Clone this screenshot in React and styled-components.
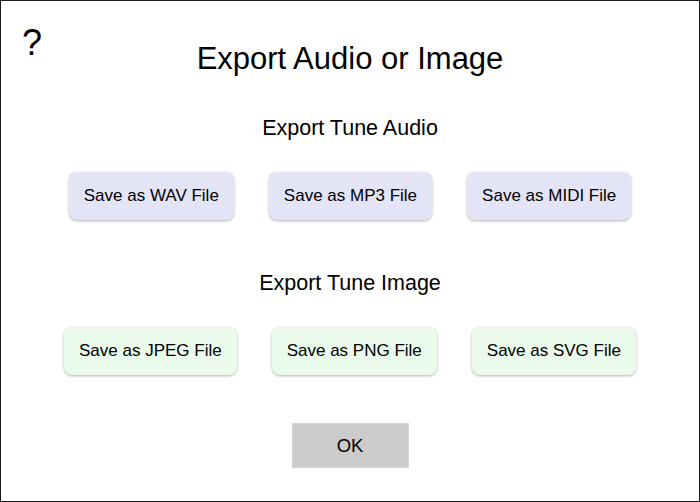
import React from 'react'
import { styled, createGlobalStyle } from 'styled-components'

const GlobalStyle = createGlobalStyle`
  html, body {
    margin: 0;
    padding: 0;
    background: #ffffff;
  }
  body {
    font-family: 'Liberation Sans', Arial, Helvetica, sans-serif;
    color: #000;
  }
`

const audioButtons = ['Save as WAV File', 'Save as MP3 File', 'Save as MIDI File']
const imageButtons = ['Save as JPEG File', 'Save as PNG File', 'Save as SVG File']

function App () {
  return (
    <>
      <GlobalStyle />
      <Dialog>
        {/* help button in the corner */}
        <Help title='Help'>?</Help>
        <Title>Export Audio or Image</Title>

        <Section>
          <Heading>Export Tune Audio</Heading>
          <Row>
            {audioButtons.map(label => (
              <SaveButton key={label} $tone='audio'>{label}</SaveButton>
            ))}
          </Row>
        </Section>

        <Section $gap={51}>
          <Heading>Export Tune Image</Heading>
          <Row>
            {imageButtons.map(label => (
              <SaveButton key={label} $tone='image'>{label}</SaveButton>
            ))}
          </Row>
        </Section>

        <OkButton>OK</OkButton>
      </Dialog>
    </>
  )
}

export default App

const Dialog = styled.div`
  position: relative;
  box-sizing: border-box;
  width: 700px;
  height: 502px;
  border: 1px solid #1c1c1c;
  padding-top: 40px;
  display: flex;
  flex-direction: column;
  align-items: center;
  background: #fff;
`

const Help = styled.div`
  position: absolute;
  top: 24px;
  left: 21px;
  font-size: 36px;
  line-height: 36px;
  cursor: pointer;
  user-select: none;
`

const Title = styled.h1`
  margin: 0;
  font-size: 31px;
  line-height: 36px;
  font-weight: normal;
  text-align: center;
`

const Section = styled.section`
  display: flex;
  flex-direction: column;
  align-items: center;
  margin-top: ${p => p.$gap ?? 39}px;
`

const Heading = styled.h2`
  margin: 0 0 32px;
  font-size: 21.5px;
  line-height: 24px;
  font-weight: normal;
`

const Row = styled.div`
  display: flex;
  justify-content: center;
  gap: 35px;
`

const SaveButton = styled.button`
  height: 48px;
  padding: 0 15px;
  border: none;
  border-radius: 8px;
  background: ${p => (p.$tone === 'audio' ? '#e4e4f7' : '#eafaeb')};
  box-shadow: 0 1px 3px rgba(0, 0, 0, 0.3);
  font-family: inherit;
  font-size: 17px;
  color: #000;
  cursor: pointer;
`

const OkButton = styled.button`
  margin-top: 48px;
  width: 117px;
  height: 45px;
  background: #cbcbcb;
  border: 1px solid #d6d6d6;
  font-family: inherit;
  font-size: 18.5px;
  color: #000;
  cursor: pointer;
`
